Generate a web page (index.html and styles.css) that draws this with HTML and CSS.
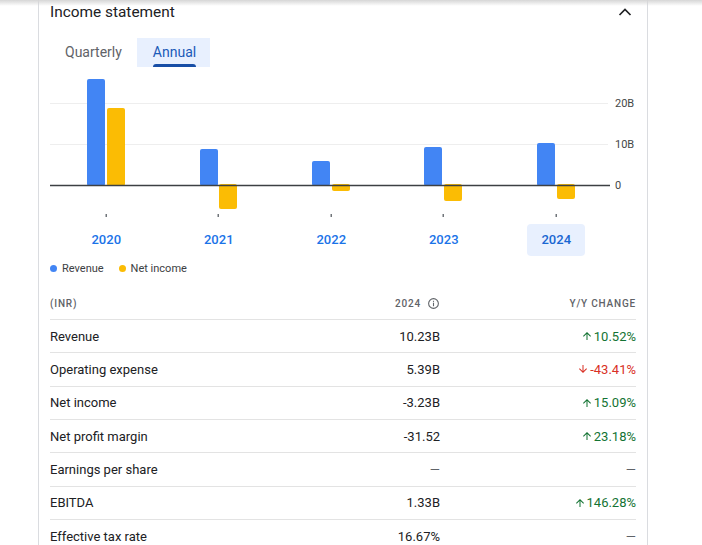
FILE: index.html
```html
<!DOCTYPE html>
<html lang="en">
<head>
<meta charset="utf-8">
<title>Income statement</title>
<link rel="stylesheet" href="styles.css">
</head>
<body>
<div class="topshade"></div>
<div class="card">
  <div class="head">
    <h2 class="title">Income statement</h2>
    <svg class="chev" viewBox="0 0 24 24" width="24" height="24" aria-hidden="true"><path d="M6.5 15l5.5-5.5 5.5 5.5" fill="none" stroke="#202124" stroke-width="1.7"/></svg>
  </div>
  <div class="tabs">
    <div class="tab">Quarterly</div>
    <div class="tab active">Annual</div>
  </div>
  <svg class="chart" width="586" height="150" viewBox="0 0 586 150">
    <line x1="0" y1="33.5" x2="558" y2="33.5" stroke="#eeeeee" stroke-width="1"/>
    <line x1="0" y1="74.5" x2="558" y2="74.5" stroke="#eeeeee" stroke-width="1"/>
    <text class="ylab" x="565" y="37">20B</text>
    <text class="ylab" x="565" y="78">10B</text>
    <text class="ylab" x="565" y="119">0</text>
    <rect x="37" y="9" width="18" height="107" rx="2" fill="#4285f4"/>
    <rect x="57" y="38" width="18" height="78" rx="2" fill="#fbbc04"/>
    <rect x="150" y="79" width="18" height="37" rx="2" fill="#4285f4"/>
    <rect x="169" y="114" width="18" height="25" rx="2" fill="#fbbc04"/>
    <rect x="262" y="91" width="18" height="25" rx="2" fill="#4285f4"/>
    <rect x="282" y="114" width="18" height="7" rx="2" fill="#fbbc04"/>
    <rect x="374" y="77" width="18" height="39" rx="2" fill="#4285f4"/>
    <rect x="394" y="114" width="18" height="17" rx="2" fill="#fbbc04"/>
    <rect x="487" y="73" width="18" height="43" rx="2" fill="#4285f4"/>
    <rect x="507" y="114" width="18" height="15" rx="2" fill="#fbbc04"/>
    <line x1="0" y1="115.5" x2="560" y2="115.5" stroke="#3c4043" stroke-width="1.3"/>
    <rect x="55.5" y="144" width="1.5" height="3" fill="#70757a"/>
    <rect x="167.5" y="144" width="1.5" height="3" fill="#70757a"/>
    <rect x="280.5" y="144" width="1.5" height="3" fill="#70757a"/>
    <rect x="392.5" y="144" width="1.5" height="3" fill="#70757a"/>
    <rect x="505.5" y="144" width="1.5" height="3" fill="#70757a"/>
  </svg>
  <div class="years">
    <div class="year">2020</div>
    <div class="year">2021</div>
    <div class="year">2022</div>
    <div class="year">2023</div>
    <div class="year selected">2024</div>
  </div>
  <div class="legend">
    <span class="dot blue"></span><span class="lg">Revenue</span>
    <span class="dot yellow"></span><span class="lg">Net income</span>
  </div>
  <div class="table">
    <div class="row hdr">
      <div class="c1">(INR)</div>
      <div class="c2">2024 <svg class="info" viewBox="0 0 24 24" width="13" height="13"><circle cx="12" cy="12" r="9" fill="none" stroke="#5f6368" stroke-width="2"/><rect x="11" y="10.5" width="2" height="6.5" fill="#5f6368"/><rect x="11" y="7" width="2" height="2" fill="#5f6368"/></svg></div>
      <div class="c3">Y/Y CHANGE</div>
    </div>
    <div class="row">
      <div class="c1">Revenue</div>
      <div class="c2">10.23B</div>
      <div class="c3 up"><svg class="arr" viewBox="0 0 24 24" width="12" height="12"><path d="M4 12l1.41 1.41L11 7.83V20h2V7.83l5.58 5.59L20 12l-8-8-8 8z" fill="currentColor"/></svg>10.52%</div>
    </div>
    <div class="row">
      <div class="c1">Operating expense</div>
      <div class="c2">5.39B</div>
      <div class="c3 down"><svg class="arr" viewBox="0 0 24 24" width="12" height="12"><path d="M20 12l-1.41-1.41L13 16.170V4h-2v12.17l-5.58-5.59L4 12l8 8 8-8z" fill="currentColor"/></svg>-43.41%</div>
    </div>
    <div class="row">
      <div class="c1">Net income</div>
      <div class="c2">-3.23B</div>
      <div class="c3 up"><svg class="arr" viewBox="0 0 24 24" width="12" height="12"><path d="M4 12l1.41 1.41L11 7.83V20h2V7.83l5.58 5.59L20 12l-8-8-8 8z" fill="currentColor"/></svg>15.09%</div>
    </div>
    <div class="row">
      <div class="c1">Net profit margin</div>
      <div class="c2">-31.52</div>
      <div class="c3 up"><svg class="arr" viewBox="0 0 24 24" width="12" height="12"><path d="M4 12l1.41 1.41L11 7.83V20h2V7.83l5.58 5.59L20 12l-8-8-8 8z" fill="currentColor"/></svg>23.18%</div>
    </div>
    <div class="row">
      <div class="c1">Earnings per share</div>
      <div class="c2 dash">—</div>
      <div class="c3 dash">—</div>
    </div>
    <div class="row">
      <div class="c1">EBITDA</div>
      <div class="c2">1.33B</div>
      <div class="c3 up"><svg class="arr" viewBox="0 0 24 24" width="12" height="12"><path d="M4 12l1.41 1.41L11 7.83V20h2V7.83l5.58 5.59L20 12l-8-8-8 8z" fill="currentColor"/></svg>146.28%</div>
    </div>
    <div class="row">
      <div class="c1">Effective tax rate</div>
      <div class="c2">16.67%</div>
      <div class="c3 dash">—</div>
    </div>
  </div>
</div>
</body>
</html>
```

FILE: styles.css
```css
html, body {
  margin: 0;
  padding: 0;
  background: #ffffff;
  font-family: Roboto, "Liberation Sans", Arial, sans-serif;
  color: #202124;
  overflow: hidden;
}
.topshade {
  position: fixed;
  top: 0;
  left: 0;
  right: 0;
  height: 6px;
  background: linear-gradient(#d6d6d6, rgba(255,255,255,0));
  z-index: 5;
}
.card {
  margin-left: 38px;
  width: 610px;
  box-sizing: border-box;
  border-left: 1px solid #dadce0;
  border-right: 1px solid #dadce0;
  padding: 0 10px 0 11px;
  min-height: 545px;
}
.head {
  display: flex;
  align-items: center;
  justify-content: space-between;
  height: 24px;
}
.title {
  margin: 0;
  font-size: 15.4px;
  font-weight: 400;
  line-height: 24px;
  color: #202124;
}
.chev { display: block; }
.tabs {
  display: flex;
  margin-top: 14px;
}
.tab {
  height: 29px;
  box-sizing: border-box;
  padding: 0 15px;
  font-size: 14px;
  line-height: 28px;
  color: #5f6368;
  position: relative;
}
.tab.active {
  background: #e8f0fe;
  color: #1a5ab8;
  padding: 0 14px 0 16px;
}
.tab.active::after {
  content: "";
  position: absolute;
  left: 16px;
  right: 14px;
  bottom: 0;
  height: 3px;
  background: #174ea6;
  border-radius: 3px 3px 0 0;
}
.chart {
  display: block;
  margin-top: 3px;
}
.ylab {
  font-family: Roboto, "Liberation Sans", Arial, sans-serif;
  font-size: 11px;
  fill: #444746;
}
.years {
  display: grid;
  grid-template-columns: repeat(5, 112.5px);
  margin-top: 4px;
}
.year {
  justify-self: center;
  width: 58px;
  height: 32px;
  border-radius: 4px;
  text-align: center;
  line-height: 32px;
  font-size: 13px;
  font-weight: 500;
  color: #1a73e8;
}
.year.selected {
  background: #e8f0fe;
  color: #1967d2;
}
.legend {
  display: flex;
  align-items: center;
  margin-top: 4px;
  height: 16px;
  font-size: 11px;
  color: #3c4043;
}
.dot {
  width: 7px;
  height: 7px;
  border-radius: 50%;
  margin: 0 5px 0 -1px;
}
.dot.blue { background: #4285f4; margin-left: 0; }
.dot.yellow { background: #fbbc04; margin-left: 15px; }
.table {
  margin-top: 11px;
  margin-right: 1px;
}
.row {
  display: grid;
  grid-template-columns: 1fr 140px 196px;
  align-items: center;
  box-sizing: border-box;
  height: 33.33px;
  border-bottom: 1px solid #e3e3e3;
  font-size: 13px;
  color: #202124;
}
.row:last-child { border-bottom: none; }
.row.hdr {
  height: 33px;
  font-size: 10px;
  font-weight: 500;
  letter-spacing: 0.8px;
  color: #5f6368;
}
.c2, .c3 {
  text-align: right;
  display: flex;
  justify-content: flex-end;
  align-items: center;
}
.info { margin-left: 6px; }
.up { color: #137333; }
.down { color: #d93025; }
.arr { margin-right: 1px; }
.dash { color: #5f6368; }
```
